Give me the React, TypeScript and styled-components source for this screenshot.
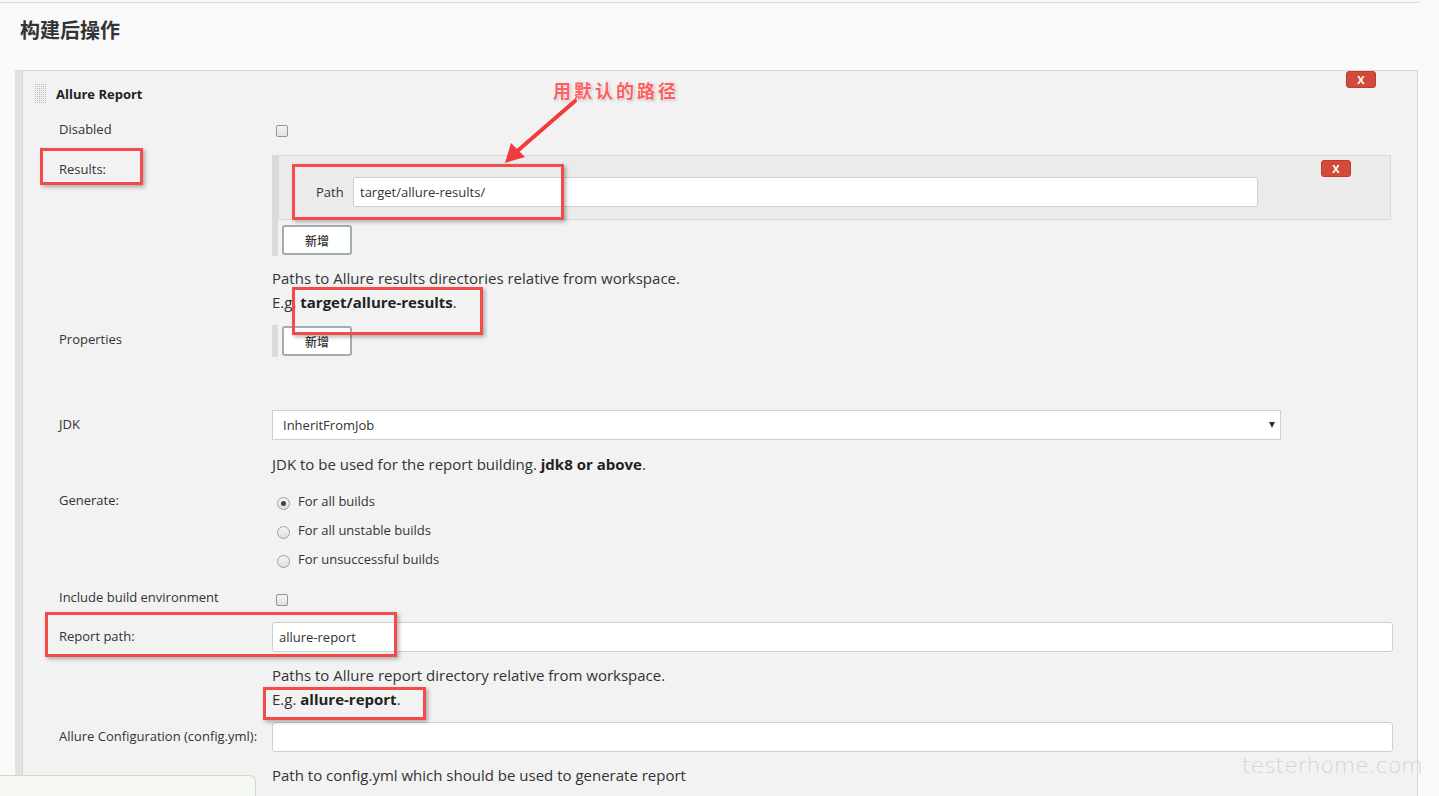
import styled, { createGlobalStyle } from "styled-components";

const GlobalStyle = createGlobalStyle`
  html, body {
    margin: 0;
    padding: 0;
  }
  body {
    background: #f9f9f9;
    font-family: "Open Sans", "Noto Sans CJK SC", sans-serif;
    color: #333;
    overflow: hidden;
  }
`;

const Page = styled.div`
  position: relative;
  width: 1439px;
  height: 796px;
  overflow: hidden;
`;

const TopRule = styled.div`
  margin-top: 2px;
  border-top: 1px solid #dcdcdc;
  width: 1420px;
`;

const Heading = styled.h2`
  margin: 13px 0 26px 20px;
  font: 700 20px/28px "Noto Sans CJK SC", sans-serif;
  color: #333;
`;

const Section = styled.section`
  position: relative;
  margin-left: 15px;
  width: 1403px;
  box-sizing: border-box;
  border-left: 7px solid #e1e1e1;
`;

const Panel = styled.div`
  border: 1px solid #d6d6d6;
  border-bottom: none;
  background: #f2f2f2;
  height: 760px;
  box-sizing: border-box;
`;

const Header = styled.div`
  display: flex;
  align-items: center;
  gap: 9px;
  padding: 13px 0 0 12px;
  font-size: 13px;
  font-weight: 700;
  color: #222;
`;

const DeleteButton = styled.button<{ $top: number; $right: number }>`
  position: absolute;
  top: ${(p) => p.$top}px;
  right: ${(p) => p.$right}px;
  width: 30px;
  height: 17px;
  padding: 0;
  background: #d24a3a;
  border: 1px solid #c23b2c;
  border-radius: 3px;
  color: #fff;
  font: 700 11px/15px "Open Sans", sans-serif;
`;

const Row = styled.div<{ $mt: number }>`
  display: flex;
  align-items: flex-start;
  margin-top: ${(p) => p.$mt}px;
`;

const Label = styled.div`
  flex: none;
  width: 249px;
  box-sizing: border-box;
  padding: 5px 0 0 36px;
  font-size: 13px;
  line-height: 18px;
  white-space: nowrap;
`;

const Field = styled.div`
  flex: none;
  width: 1121px;
  display: flex;
  flex-direction: column;
  align-items: flex-start;
`;

const CheckBox = styled.span<{ $mt: number }>`
  display: block;
  width: 10px;
  height: 10px;
  margin: ${(p) => p.$mt}px 0 0 4px;
  border: 1px solid #959595;
  border-radius: 2px;
  background: linear-gradient(#f4f4f4, #e0e0e0);
`;

const Repeat = styled.div<{ $pt: number }>`
  align-self: stretch;
  display: flex;
  flex-direction: column;
  align-items: flex-start;
  border-left: 6px solid #dadada;
  padding: ${(p) => p.$pt}px 2px 1px 0;
`;

const RepeatBox = styled.div`
  position: relative;
  align-self: stretch;
  height: 65px;
  box-sizing: border-box;
  border: 1px solid #d8d8d8;
  background: #ebebeb;
  display: flex;
  align-items: flex-start;
  padding: 21px 0 0 37px;
`;

const PathLabel = styled.span`
  width: 37px;
  font-size: 13px;
  line-height: 30px;
`;

const TextInput = styled.input<{ $w: number }>`
  width: ${(p) => p.$w}px;
  height: 30px;
  box-sizing: border-box;
  border: 1px solid #cfcfcf;
  border-radius: 3px;
  background: #fff;
  padding: 0 6px;
  font: 13px "Open Sans", sans-serif;
  color: #333;
  outline: none;
`;

const AddButton = styled.button<{ $mt: number }>`
  width: 70px;
  height: 30px;
  margin: ${(p) => p.$mt}px 0 0 4px;
  box-sizing: border-box;
  border: 2px solid #a2acb3;
  border-radius: 3px;
  background: #fff;
  font: 500 12px "Noto Sans CJK SC", sans-serif;
  color: #333;
  padding: 0;
`;

const Help = styled.div<{ $mt: number }>`
  margin-top: ${(p) => p.$mt}px;
  font-size: 15px;
  line-height: 24px;
  color: #333;

  b {
    font-weight: 700;
    color: #222;
  }
`;

const Select = styled.div`
  position: relative;
  width: 1009px;
  height: 30px;
  box-sizing: border-box;
  border: 1px solid #cfcfcf;
  background: #fff;
  padding-left: 10px;
  font-size: 13px;
  line-height: 28px;
`;

const Caret = styled.span`
  position: absolute;
  right: 5px;
  top: 11px;
  border-left: 3.5px solid transparent;
  border-right: 3.5px solid transparent;
  border-top: 6px solid #333;
`;

const RadioRow = styled.label`
  display: flex;
  align-items: center;
  height: 29px;
  font-size: 13px;
`;

const Radio = styled.span<{ $on?: boolean }>`
  position: relative;
  width: 11px;
  height: 11px;
  margin: 6px 8px 0 5px;
  border: 1px solid #a0a0a0;
  border-radius: 50%;
  background: linear-gradient(#f6f6f6, #dedede);

  &::after {
    content: "";
    display: ${(p) => (p.$on ? "block" : "none")};
    position: absolute;
    left: 3px;
    top: 3px;
    width: 5px;
    height: 5px;
    border-radius: 50%;
    background: #444;
  }
`;

const Mark = styled.div<{ $x: number; $y: number; $w: number; $h: number }>`
  position: absolute;
  left: ${(p) => p.$x}px;
  top: ${(p) => p.$y}px;
  width: ${(p) => p.$w}px;
  height: ${(p) => p.$h}px;
  box-sizing: border-box;
  border: 3px solid #f34a4a;
  box-shadow: 2px 2px 4px rgba(0, 0, 0, 0.3);
  pointer-events: none;
`;

const Note = styled.div`
  position: absolute;
  left: 553px;
  top: 78px;
  font: 700 18px/24px "Noto Sans CJK SC", sans-serif;
  letter-spacing: 3px;
  color: #ff5f5f;
  text-shadow: 0 0 2px #fff, 0 0 3px #fff, 1px 1px 3px rgba(0, 0, 0, 0.35);
`;

const Arrow = styled.svg`
  position: absolute;
  left: 495px;
  top: 95px;
  overflow: visible;
`;

const Toast = styled.div`
  position: absolute;
  left: 0;
  top: 775px;
  width: 256px;
  height: 30px;
  box-sizing: border-box;
  border: 1px solid #c9dcc6;
  border-left: none;
  border-top-right-radius: 7px;
  background: #f6f9f3;
`;

const Watermark = styled.div`
  position: absolute;
  left: 1242px;
  top: 750px;
  font: 200 22px/32px "DejaVu Sans", sans-serif;
  color: #d4d4d4;
  white-space: nowrap;
  pointer-events: none;
`;

function Handle() {
  const dots = [];
  for (let y = 0; y < 19; y += 2) {
    for (let x = 0; x < 12; x += 2) {
      dots.push(<rect key={`${x}-${y}`} x={x} y={y} width="1" height="1" fill="#b8b8b8" />);
    }
  }
  return (
    <svg width="12" height="19" viewBox="0 0 12 19">
      {dots}
    </svg>
  );
}

export default function App() {
  return (
    <Page>
      <GlobalStyle />
      <TopRule />
      <Heading>构建后操作</Heading>
      <Section>
        <Panel>
          <Header>
            <Handle />
            Allure Report
          </Header>

          <Row $mt={12}>
            <Label>Disabled</Label>
            <Field>
              <CheckBox $mt={10} />
            </Field>
          </Row>

          <Row $mt={17}>
            <Label>Results:</Label>
            <Field>
              <Repeat $pt={0}>
                <RepeatBox>
                  <PathLabel>Path</PathLabel>
                  <TextInput $w={905} readOnly value="target/allure-results/" />
                  <DeleteButton $top={4} $right={39}>X</DeleteButton>
                </RepeatBox>
                <AddButton $mt={5}>新增</AddButton>
              </Repeat>
              <Help $mt={10}>
                Paths to Allure results directories relative from workspace.
                <br />
                E.g. <b>target/allure-results</b>.
              </Help>
            </Field>
          </Row>

          <Row $mt={11}>
            <Label>Properties</Label>
            <Field>
              <Repeat $pt={1}>
                <AddButton $mt={0}>新增</AddButton>
              </Repeat>
            </Field>
          </Row>

          <Row $mt={53}>
            <Label>JDK</Label>
            <Field>
              <Select>
                InheritFromJob
                <Caret />
              </Select>
              <Help $mt={12}>
                JDK to be used for the report building. <b>jdk8 or above</b>.
              </Help>
            </Field>
          </Row>

          <Row $mt={10}>
            <Label>Generate:</Label>
            <Field>
              <RadioRow>
                <Radio $on />
                For all builds
              </RadioRow>
              <RadioRow>
                <Radio />
                For all unstable builds
              </RadioRow>
              <RadioRow>
                <Radio />
                For unsuccessful builds
              </RadioRow>
            </Field>
          </Row>

          <Row $mt={10}>
            <Label>Include build environment</Label>
            <Field>
              <CheckBox $mt={11} />
            </Field>
          </Row>

          <Row $mt={16}>
            <Label>Report path:</Label>
            <Field>
              <TextInput $w={1121} readOnly value="allure-report" />
              <Help $mt={11}>
                Paths to Allure report directory relative from workspace.
                <br />
                E.g. <b>allure-report</b>.
              </Help>
            </Field>
          </Row>

          <Row $mt={11}>
            <Label>Allure Configuration (config.yml):</Label>
            <Field>
              <TextInput $w={1121} readOnly value="" />
              <Help $mt={11}>Path to config.yml which should be used to generate report</Help>
            </Field>
          </Row>
        </Panel>
        <DeleteButton $top={1} $right={42}>X</DeleteButton>
      </Section>

      <Mark $x={40} $y={148} $w={103} $h={37} />
      <Mark $x={292} $y={164} $w={272} $h={56} />
      <Mark $x={292} $y={287} $w={191} $h={48} />
      <Mark $x={45} $y={612} $w={352} $h={45} />
      <Mark $x={263} $y={687} $w={163} $h={33} />

      <Note>用默认的路径</Note>
      <Arrow width="90" height="75" viewBox="0 0 90 75">
        <line x1="80" y1="6" x2="20" y2="58" stroke="#f03c3c" strokeWidth="4" strokeLinecap="round" />
        <polygon points="10,68 16,48 30,62" fill="#f03c3c" />
      </Arrow>

      <Toast />
      <Watermark>testerhome.com</Watermark>
    </Page>
  );
}
